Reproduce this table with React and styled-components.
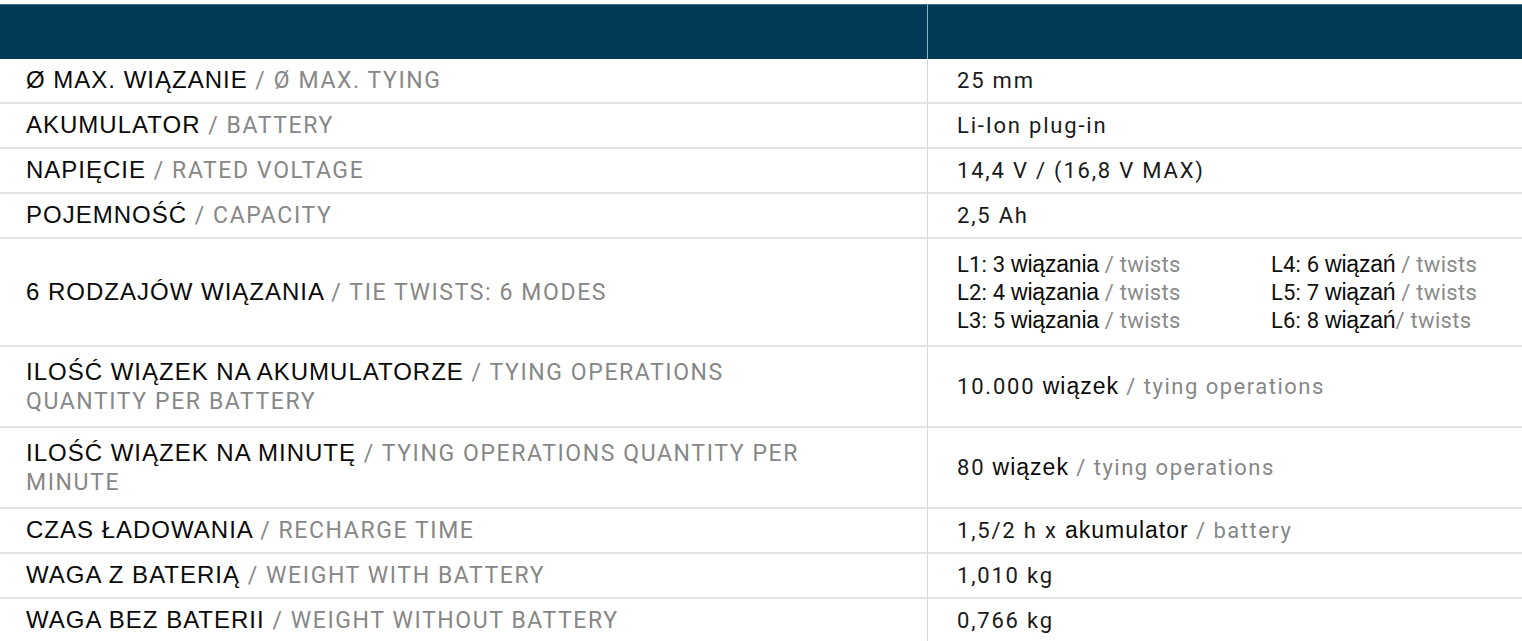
import React from "react";
import styled, { createGlobalStyle } from "styled-components";

const Global = createGlobalStyle`
  html, body { margin: 0; padding: 0; background: #fff; }
  body { font-family: "Liberation Sans", Arial, sans-serif; }
`;

const Page = styled.div`
  padding-top: 4px;
`;

const Table = styled.div`
  display: grid;
  grid-template-columns: 928px 1fr;
`;

const HeadCell = styled.div`
  height: 55px;
  background: #013a57;
  border-top: 1px solid #3d6d86;
  box-sizing: border-box;
  ${(p) => (p.$first ? "border-right: 1px solid #8fb0c2;" : "")}
`;

const Cell = styled.div`
  display: flex;
  align-items: center;
  box-sizing: border-box;
  height: ${(p) => p.$h}px;
  padding-left: ${(p) => (p.$first ? "26px" : "29px")};
  border-bottom: 2px solid #e3e3e3;
  ${(p) => (p.$first ? "border-right: 1px solid #d4d4d4;" : "")}
  line-height: 28px;
`;

const Label = styled.div`
  font-family: "Liberation Sans", Arial, sans-serif;
  font-size: 24px;
  letter-spacing: 1px;
  line-height: 28px;
  color: #0a0a0a;
`;

const En = styled.span`
  font-family: Roboto, "DejaVu Sans", sans-serif;
  font-size: 23px;
  letter-spacing: 1.6px;
  color: #878787;
`;

const Value = styled.div`
  font-family: Roboto, "DejaVu Sans", sans-serif;
  font-size: 22px;
  letter-spacing: 1.8px;
  line-height: 28px;
  color: #1a1a1a;
  white-space: nowrap;
`;

const Pl = styled.span`
  font-family: "Liberation Sans", Arial, sans-serif;
  font-size: 23px;
  letter-spacing: 1px;
  color: #0a0a0a;
`;

const Gray = styled.span`
  font-family: Roboto, "DejaVu Sans", sans-serif;
  color: #878787;
  letter-spacing: 1.5px;
`;

const Modes = styled.div`
  display: grid;
  grid-template-columns: 314px auto;
  grid-auto-rows: 28px;
  font-family: Roboto, "DejaVu Sans", sans-serif;
  font-size: 22px;
  line-height: 28px;
  color: #111;
`;

const Mode = styled.div`
  white-space: nowrap;
  letter-spacing: 0.2px;
  height: 28px;
`;

const ModePl = styled.span`
  font-family: "Liberation Sans", Arial, sans-serif;
  font-size: 23px;
  letter-spacing: -0.2px;
  color: #0a0a0a;
`;

const ModeGray = styled.span`
  color: #8a8a8a;
  letter-spacing: 0.3px;
`;

const modes = [
  ["L1: 3", "wiązania", " / twists"],
  ["L4: 6", "wiązań", " / twists"],
  ["L2: 4", "wiązania", " / twists"],
  ["L5: 7", "wiązań", " / twists"],
  ["L3: 5", "wiązania", " / twists"],
  ["L6: 8", "wiązań", "/ twists"],
];

const rows = [
  { pl: "Ø MAX. WIĄZANIE", en: "Ø MAX. TYING", value: <Value>25 mm</Value> },
  { pl: "AKUMULATOR", en: "BATTERY", value: <Value>Li-Ion plug-in</Value> },
  { pl: "NAPIĘCIE", en: "RATED VOLTAGE", value: <Value>14,4 V / (16,8 V MAX)</Value> },
  { pl: "POJEMNOŚĆ", en: "CAPACITY", value: <Value>2,5 Ah</Value> },
  {
    pl: "6 RODZAJÓW WIĄZANIA",
    en: "TIE TWISTS: 6 MODES",
    h: 108,
    value: (
      <Modes>
        {modes.map(([a, b, c]) => (
          <Mode key={a}>
            {a} <ModePl>{b}</ModePl>
            <ModeGray>{c}</ModeGray>
          </Mode>
        ))}
      </Modes>
    ),
  },
  {
    pl: "ILOŚĆ WIĄZEK NA AKUMULATORZE",
    en: (
      <>
        TYING OPERATIONS
        <br />
        QUANTITY PER BATTERY
      </>
    ),
    h: 81,
    value: (
      <Value>
        10.000 <Pl>wiązek</Pl> <Gray>/ tying operations</Gray>
      </Value>
    ),
  },
  {
    pl: "ILOŚĆ WIĄZEK NA MINUTĘ",
    en: (
      <>
        TYING OPERATIONS QUANTITY PER
        <br />
        MINUTE
      </>
    ),
    h: 81,
    value: (
      <Value>
        80 <Pl>wiązek</Pl> <Gray>/ tying operations</Gray>
      </Value>
    ),
  },
  {
    pl: "CZAS ŁADOWANIA",
    en: "RECHARGE TIME",
    value: (
      <Value>
        1,5/2 h x <Pl>akumulator</Pl> <Gray>/ battery</Gray>
      </Value>
    ),
  },
  { pl: "WAGA Z BATERIĄ", en: "WEIGHT WITH BATTERY", value: <Value>1,010 kg</Value> },
  { pl: "WAGA BEZ BATERII", en: "WEIGHT WITHOUT BATTERY", value: <Value>0,766 kg</Value> },
];

export default function App() {
  return (
    <Page>
      <Global />
      <Table>
        <HeadCell $first />
        <HeadCell />
        {rows.map((r, i) => (
          <React.Fragment key={i}>
            <Cell $first $h={r.h || 45}>
              <Label>
                {r.pl} <En>/ {r.en}</En>
              </Label>
            </Cell>
            <Cell $h={r.h || 45}>{r.value}</Cell>
          </React.Fragment>
        ))}
      </Table>
    </Page>
  );
}
